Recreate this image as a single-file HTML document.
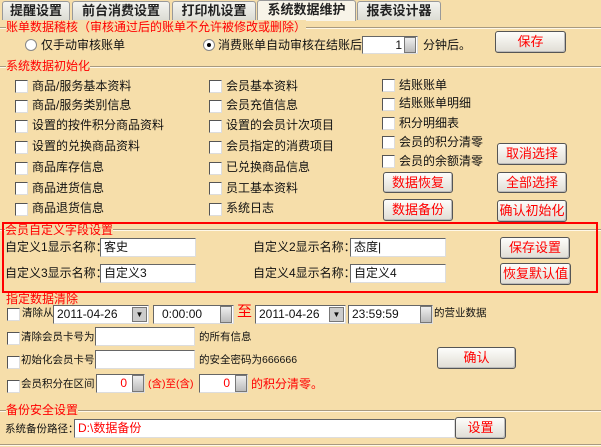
<!DOCTYPE html>
<html><head><meta charset="utf-8"><style>
*{box-sizing:border-box;margin:0;padding:0}
body{width:601px;height:447px;overflow:hidden;background:#f6deaa;font-family:"Liberation Sans","Noto Sans CJK SC",sans-serif;font-size:12px;color:#111;position:relative}
.a{position:absolute;white-space:nowrap;line-height:14px}
.s{font-size:10.5px}
.r{color:#f00}
.tab{position:absolute;top:1px;height:19px;border:1px solid #999;border-bottom:none;border-radius:3px 3px 0 0;background:linear-gradient(#f4f4f0,#dcdcd4);font-size:13px;font-weight:bold;color:#222;text-align:center;line-height:18px}
.line{position:absolute;left:0;width:601px;height:2px;border-top:1px solid #a89a80;border-bottom:1px solid #fff8e8}
.cb{position:absolute;width:13px;height:13px;background:#fff;border:1px solid #555;border-right-color:#ddd;border-bottom-color:#ddd}
.in{position:absolute;background:#fff;border:1px solid #666;border-right-color:#ddd;border-bottom-color:#ddd;font-size:12px;line-height:16px;padding-left:3px;white-space:nowrap;overflow:hidden}
.btn{position:absolute;background:linear-gradient(#fdfdfb,#e0ddd4);border:1px solid #555;border-radius:3px;color:#f00;text-align:center;font-size:13px;box-shadow:inset -1px -1px 0 #bbb}
.rad{position:absolute;width:12px;height:12px;border-radius:50%;background:#fff;border:1px solid #888}
.spin{position:absolute;width:12px;background:linear-gradient(#eee,#bbb);border:1px solid #777}
.dd{position:absolute;width:15px;height:15px;background:#ccc;border:1px solid #777;font-size:8px;text-align:center;line-height:13px}
</style></head><body>
<div class="tab" style="left:2px;width:68px">提醒设置</div>
<div class="tab" style="left:72px;width:98px">前台消费设置</div>
<div class="tab" style="left:172px;width:84px">打印机设置</div>
<div class="tab" style="left:257px;width:99px;top:0;height:21px;background:#f8f4e8">系统数据维护</div>
<div class="tab" style="left:357px;width:84px">报表设计器</div>

<div class="line" style="top:27px"></div>
<div class="a r" style="left:6px;top:20px;background:#f6deaa;font-size:12px">账单数据稽核（审核通过后的账单不允许被修改或删除）</div>
<div class="rad" style="left:25px;top:39px"></div>
<div class="a" style="left:41px;top:38px">仅手动审核账单</div>
<div class="rad" style="left:203px;top:39px"><div style="width:4px;height:4px;background:#000;border-radius:50%;margin:3px"></div></div>
<div class="a" style="left:218px;top:38px">消费账单自动审核在结账后</div>
<div class="in" style="left:362px;top:36px;width:56px;height:18px;text-align:right;padding-right:15px">1</div>
<div class="spin" style="left:404px;top:37px;height:16px"></div>
<div class="a" style="left:423px;top:38px">分钟后。</div>
<div class="btn" style="left:495px;top:31px;width:71px;height:22px;line-height:20px">保存</div>

<div class="line" style="top:66px"></div>
<div class="a r" style="left:6px;top:59px;background:#f6deaa;font-size:12px">系统数据初始化</div>

<div class="cb" style="left:15px;top:80px"></div><div class="a" style="left:32px;top:79px">商品/服务基本资料</div>
<div class="cb" style="left:15px;top:100px"></div><div class="a" style="left:32px;top:98px">商品/服务类别信息</div>
<div class="cb" style="left:15px;top:120px"></div><div class="a" style="left:32px;top:118px">设置的按件积分商品资料</div>
<div class="cb" style="left:15px;top:141px"></div><div class="a" style="left:32px;top:139px">设置的兑换商品资料</div>
<div class="cb" style="left:15px;top:162px"></div><div class="a" style="left:32px;top:160px">商品库存信息</div>
<div class="cb" style="left:15px;top:182px"></div><div class="a" style="left:32px;top:181px">商品进货信息</div>
<div class="cb" style="left:15px;top:203px"></div><div class="a" style="left:32px;top:201px">商品退货信息</div>

<div class="cb" style="left:209px;top:80px"></div><div class="a" style="left:226px;top:79px">会员基本资料</div>
<div class="cb" style="left:209px;top:100px"></div><div class="a" style="left:226px;top:98px">会员充值信息</div>
<div class="cb" style="left:209px;top:120px"></div><div class="a" style="left:226px;top:118px">设置的会员计次项目</div>
<div class="cb" style="left:209px;top:141px"></div><div class="a" style="left:226px;top:139px">会员指定的消费项目</div>
<div class="cb" style="left:209px;top:162px"></div><div class="a" style="left:226px;top:160px">已兑换商品信息</div>
<div class="cb" style="left:209px;top:182px"></div><div class="a" style="left:226px;top:181px">员工基本资料</div>
<div class="cb" style="left:209px;top:203px"></div><div class="a" style="left:226px;top:201px">系统日志</div>

<div class="cb" style="left:382px;top:79px"></div><div class="a" style="left:399px;top:78px">结账账单</div>
<div class="cb" style="left:382px;top:98px"></div><div class="a" style="left:399px;top:96px">结账账单明细</div>
<div class="cb" style="left:382px;top:117px"></div><div class="a" style="left:399px;top:116px">积分明细表</div>
<div class="cb" style="left:382px;top:136px"></div><div class="a" style="left:399px;top:135px">会员的积分清零</div>
<div class="cb" style="left:382px;top:155px"></div><div class="a" style="left:399px;top:154px">会员的余额清零</div>

<div class="btn" style="left:497px;top:143px;width:70px;height:22px;line-height:20px">取消选择</div>
<div class="btn" style="left:497px;top:172px;width:70px;height:21px;line-height:19px">全部选择</div>
<div class="btn" style="left:497px;top:200px;width:70px;height:22px;line-height:20px">确认初始化</div>
<div class="btn" style="left:383px;top:172px;width:70px;height:21px;line-height:19px">数据恢复</div>
<div class="btn" style="left:383px;top:199px;width:70px;height:22px;line-height:20px">数据备份</div>

<div class="line" style="top:229px"></div>
<div class="a r" style="left:5px;top:223px;background:#f6deaa;font-size:12px">会员自定义字段设置</div>
<div class="a" style="left:5px;top:240px">自定义1显示名称：</div>
<div class="in" style="left:100px;top:238px;width:96px;height:19px">客史</div>
<div class="a" style="left:253px;top:240px">自定义2显示名称：</div>
<div class="in" style="left:350px;top:238px;width:96px;height:19px">态度|</div>
<div class="a" style="left:5px;top:266px">自定义3显示名称：</div>
<div class="in" style="left:100px;top:264px;width:96px;height:19px">自定义3</div>
<div class="a" style="left:253px;top:266px">自定义4显示名称：</div>
<div class="in" style="left:350px;top:264px;width:96px;height:19px">自定义4</div>
<div class="btn" style="left:500px;top:237px;width:70px;height:22px;line-height:20px">保存设置</div>
<div class="btn" style="left:500px;top:263px;width:71px;height:22px;line-height:20px">恢复默认值</div>
<div style="position:absolute;left:2px;top:222px;width:596px;height:71px;border:2px solid #f00"></div>

<div class="a r" style="left:6px;top:292px;font-size:12px">指定数据清除</div>
<div class="cb" style="left:7px;top:308px"></div><div class="a s" style="left:22px;top:306px">清除从</div>
<div class="in s" style="left:53px;top:305px;width:96px;height:19px">2011-04-26</div><div class="dd" style="left:132px;top:307px">▼</div>
<div class="in s" style="left:153px;top:305px;width:81px;height:19px;padding-left:8px">0:00:00</div><div class="spin" style="left:220px;top:306px;height:17px"></div>
<div class="a r" style="left:237px;top:305px;font-size:15px">至</div>
<div class="in s" style="left:255px;top:305px;width:91px;height:19px">2011-04-26</div><div class="dd" style="left:329px;top:307px">▼</div>
<div class="in s" style="left:348px;top:305px;width:85px;height:19px">23:59:59</div><div class="spin" style="left:420px;top:306px;height:17px"></div>
<div class="a s" style="left:434px;top:306px">的营业数据</div>

<div class="cb" style="left:7px;top:332px"></div><div class="a s" style="left:21px;top:330px">清除会员卡号为</div>
<div class="in" style="left:95px;top:327px;width:100px;height:19px"></div>
<div class="a s" style="left:199px;top:330px">的所有信息</div>
<div class="cb" style="left:7px;top:356px"></div><div class="a s" style="left:21px;top:353px">初始化会员卡号</div>
<div class="in" style="left:95px;top:350px;width:100px;height:19px"></div>
<div class="a s" style="left:199px;top:353px">的安全密码为666666</div>
<div class="btn" style="left:437px;top:347px;width:79px;height:22px;line-height:20px">确认</div>
<div class="cb" style="left:7px;top:380px"></div><div class="a s" style="left:21px;top:377px">会员积分在区间</div>
<div class="in" style="left:96px;top:374px;width:49px;height:19px;text-align:right;padding-right:17px;color:#f00">0</div><div class="spin" style="left:132px;top:375px;height:17px"></div>
<div class="a r s" style="left:148px;top:377px">(含)至(含)</div>
<div class="in" style="left:199px;top:374px;width:49px;height:19px;text-align:right;padding-right:17px;color:#f00">0</div><div class="spin" style="left:235px;top:375px;height:17px"></div>
<div class="a r" style="left:251px;top:377px">的积分清零。</div>

<div class="line" style="top:410px"></div>
<div class="a r" style="left:6px;top:403px;background:#f6deaa;font-size:12px">备份安全设置</div>
<div class="a s" style="left:5px;top:422px">系统备份路径：</div>
<div class="in s" style="left:74px;top:419px;width:381px;height:19px;color:#f00">D:\数据备份</div>
<div class="btn" style="left:455px;top:417px;width:51px;height:22px;line-height:20px">设置</div>
<div class="line" style="top:444px"></div>
</body></html>
